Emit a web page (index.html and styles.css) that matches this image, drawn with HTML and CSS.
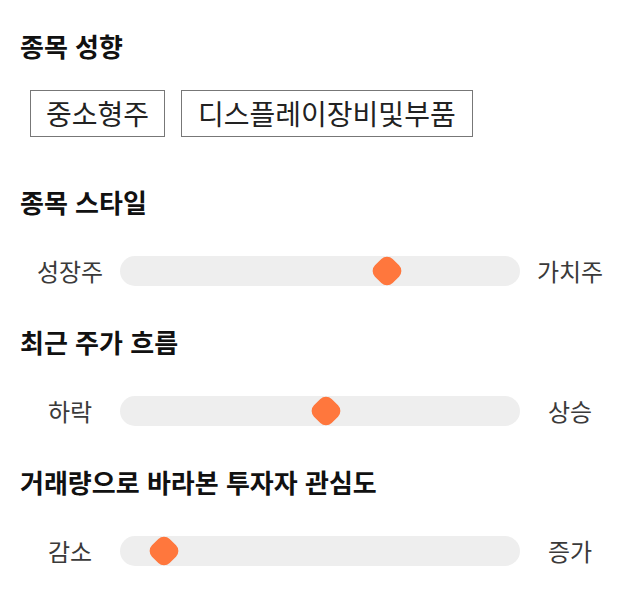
FILE: index.html
```html
<!DOCTYPE html>
<html lang="ko">
<head>
<meta charset="utf-8">
<link rel="stylesheet" href="styles.css">
</head>
<body>
<div class="page">
  <section class="section first">
    <h2 class="title">종목 성향</h2>
    <div class="chips">
      <span class="chip">중소형주</span>
      <span class="chip">디스플레이장비및부품</span>
    </div>
  </section>
  <section class="section">
    <h2 class="title">종목 스타일</h2>
    <div class="slider-row">
      <span class="label">성장주</span>
      <div class="track"><span class="thumb" style="left: 66.75%"></span></div>
      <span class="label">가치주</span>
    </div>
  </section>
  <section class="section">
    <h2 class="title">최근 주가 흐름</h2>
    <div class="slider-row">
      <span class="label">하락</span>
      <div class="track"><span class="thumb" style="left: 51.5%"></span></div>
      <span class="label">상승</span>
    </div>
  </section>
  <section class="section">
    <h2 class="title">거래량으로 바라본 투자자 관심도</h2>
    <div class="slider-row">
      <span class="label">감소</span>
      <div class="track"><span class="thumb" style="left: 11%"></span></div>
      <span class="label">증가</span>
    </div>
  </section>
</div>
</body>
</html>
```
FILE: styles.css
```css
* { box-sizing: border-box; }
html, body { margin: 0; padding: 0; background: #fff; }
body {
  font-family: "Noto Sans CJK KR", "Noto Sans", sans-serif;
  color: #111;
}
.page {
  padding: 0 20px;
  width: 640px;
}
.section { margin-top: 40px; }
.section.first { margin-top: 30px; padding-bottom: 9px; }
.title {
  margin: 0;
  font-size: 26px;
  line-height: 32px;
  font-weight: 700;
  color: #111;
}
.chips {
  display: flex;
  gap: 16px;
  margin-top: 28px;
  padding-left: 10px;
}
.chip {
  border: 1px solid #777;
  padding: 0 15px 0 15px;
  font-size: 28px;
  line-height: 45px;
  color: #222;
}
.chip + .chip { padding: 0 16px 0 16px; }
.slider-row {
  display: grid;
  grid-template-columns: 100px 400px 100px;
  align-items: center;
  margin-top: 38px;
  height: 30px;
}
.label {
  text-align: center;
  font-size: 24px;
  line-height: 30px;
  color: #3a3a3a;
}
.track {
  position: relative;
  height: 30px;
  background: #eeeeee;
  border-radius: 15px;
}
.thumb {
  position: absolute;
  top: 50%;
  width: 25px;
  height: 25px;
  background: #ff773d;
  border-radius: 8px;
  transform: translate(-50%, -50%) rotate(45deg);
}
```
